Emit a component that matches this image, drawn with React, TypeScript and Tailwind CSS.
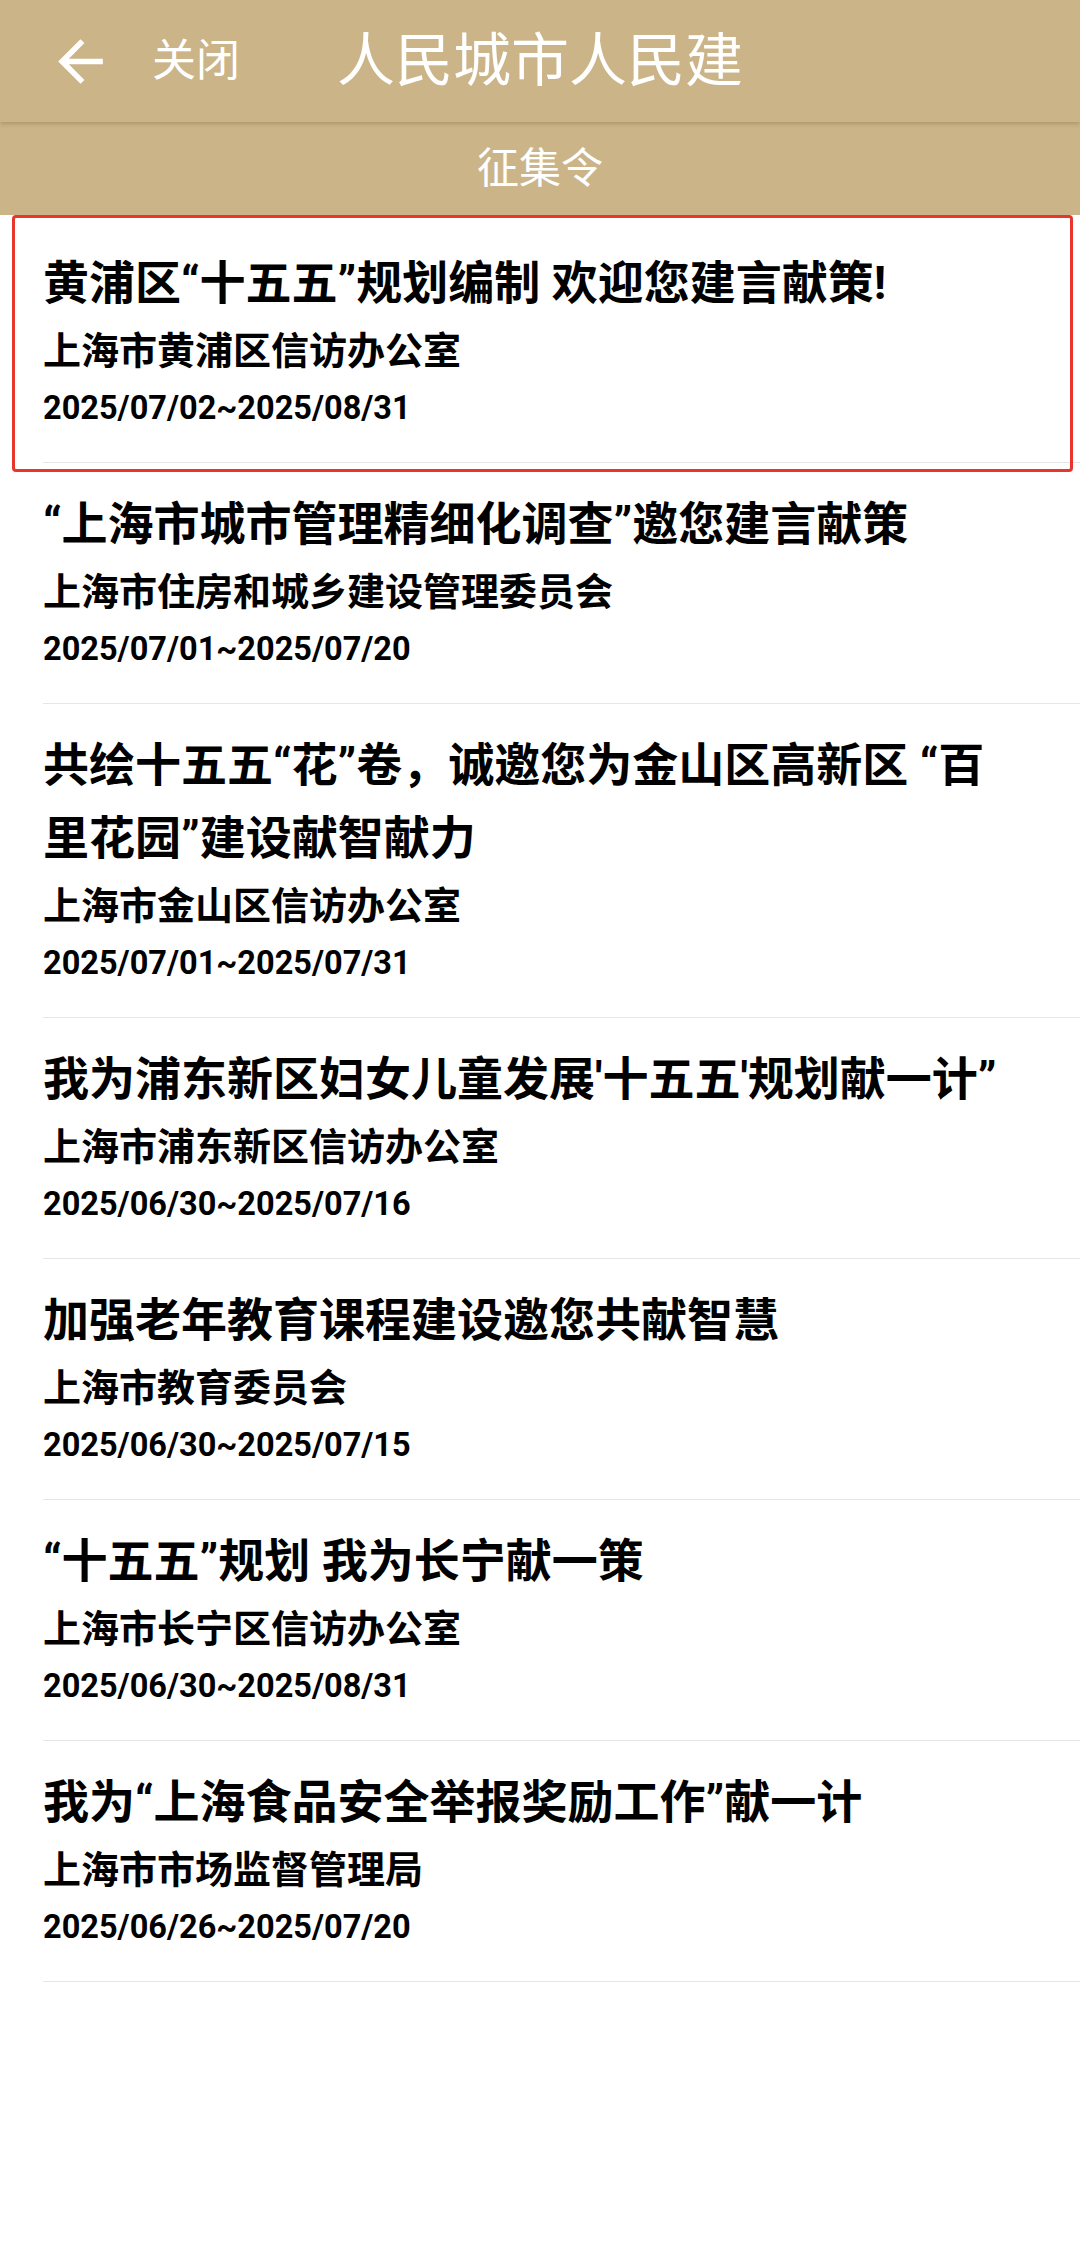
import React from "react";

const items = [
  {
    title: "黄浦区“十五五”规划编制 欢迎您建言献策!",
    org: "上海市黄浦区信访办公室",
    date: "2025/07/02~2025/08/31",
  },
  {
    title: "“上海市城市管理精细化调查”邀您建言献策",
    org: "上海市住房和城乡建设管理委员会",
    date: "2025/07/01~2025/07/20",
  },
  {
    title: "共绘十五五“花”卷，诚邀您为金山区高新区 “百里花园”建设献智献力",
    org: "上海市金山区信访办公室",
    date: "2025/07/01~2025/07/31",
  },
  {
    title: "我为浦东新区妇女儿童发展'十五五'规划献一计”",
    org: "上海市浦东新区信访办公室",
    date: "2025/06/30~2025/07/16",
  },
  {
    title: "加强老年教育课程建设邀您共献智慧",
    org: "上海市教育委员会",
    date: "2025/06/30~2025/07/15",
  },
  {
    title: "“十五五”规划 我为长宁献一策",
    org: "上海市长宁区信访办公室",
    date: "2025/06/30~2025/08/31",
  },
  {
    title: "我为“上海食品安全举报奖励工作”献一计",
    org: "上海市市场监督管理局",
    date: "2025/06/26~2025/07/20",
  },
];

export default function App() {
  return (
    <div
      className="w-[1080px] min-h-[2248px] bg-white"
      style={{ fontFamily: "Roboto, 'Noto Sans CJK SC', sans-serif" }}
    >
      {/* Top app bar */}
      <div className="relative z-10 h-[122px] bg-[#cbb588] shadow-[0_2px_4px_rgba(120,95,50,0.35)] grid grid-cols-[1fr_auto_1fr] items-center text-white">
        <div className="flex items-center pl-[47px]">
          <svg width="67" height="67" viewBox="0 0 24 24" fill="#ffffff">
            <path d="M20 11H7.83l5.59-5.59L12 4l-8 8 8 8 1.41-1.41L7.83 13H20v-2z" />
          </svg>
          <span className="ml-[38px] text-[44px] leading-none">关闭</span>
        </div>
        <div className="text-[58px] leading-none">人民城市人民建</div>
        <div />
      </div>

      {/* Sub header */}
      <div className="h-[93px] bg-[#cbb588] flex items-center justify-center text-white text-[42px] leading-none">
        征集令
      </div>

      {/* List */}
      <div className="relative pt-[7px]">
        {items.map((it, i) => (
          <div
            key={i}
            className="ml-[43px] pr-[69px] pt-[25px] pb-[29px] border-b border-[#e6e6e6] text-black font-bold"
          >
            <div className="text-[46px] leading-[73px]">{it.title}</div>
            <div className="text-[38px] leading-[63px]">{it.org}</div>
            <div className="text-[32.5px] leading-[50px]">{it.date}</div>
          </div>
        ))}

        {/* highlight outline over first item */}
        <div className="absolute left-[12px] top-0 w-[1061px] h-[257px] border-[3px] border-[#e8362d] rounded-[4px] pointer-events-none" />
      </div>
    </div>
  );
}
